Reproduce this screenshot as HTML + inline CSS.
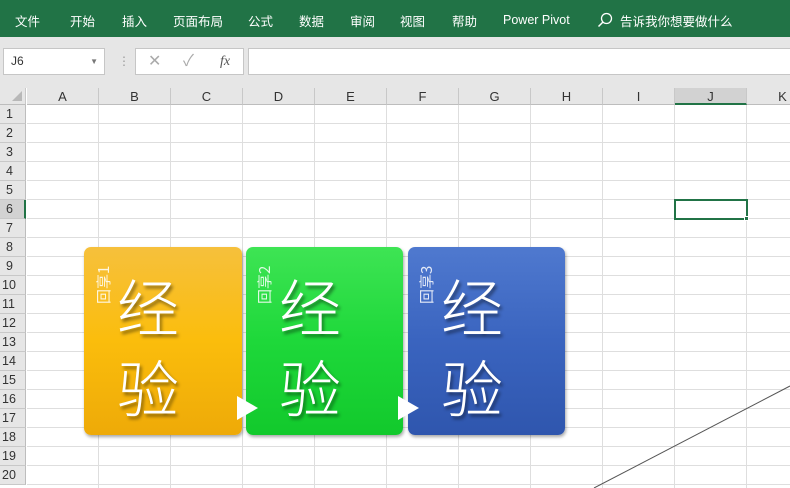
<!DOCTYPE html><html><head><meta charset="utf-8"><style>
*{margin:0;padding:0;box-sizing:border-box}
body{width:790px;height:488px;overflow:hidden;background:#fff;font-family:"Liberation Sans","Noto Sans CJK SC",sans-serif;position:relative}
.a{position:absolute}
#rib{left:0;top:0;width:790px;height:37px;background:#217346;color:#fff;font-size:12.5px}
#rib span{position:absolute;top:11px}
#fb{left:0;top:37px;width:790px;height:51px;background:#e6e6e6}
.box{background:#fff;border:1px solid #c6c6c6}
.ch{top:88px;height:17px;background:#e6e6e6;border-right:1px solid #c8c8c8;border-bottom:1px solid #bdbdbd;text-align:center;font-size:13px;line-height:17px;color:#333}
.rh{left:0;width:26px;height:19px;background:#e6e6e6;border-bottom:1px solid #c8c8c8;border-right:1px solid #bdbdbd;font-size:12.5px;line-height:19px;color:#333;padding-left:6px}
.card{border-radius:7px;box-shadow:1px 2px 3px rgba(0,0,0,.35)}
.big{position:absolute;color:#fff;font-size:62px;line-height:62px;font-weight:300;font-family:"Noto Sans CJK SC",sans-serif;text-shadow:2px 3px 3px rgba(0,0,0,.45)}
.sm{position:absolute;color:rgba(255,255,255,.85);font-size:15px;transform:rotate(-90deg);transform-origin:left top;white-space:nowrap;font-family:"Noto Sans CJK SC",sans-serif}
.tri{width:0;height:0;border-top:12px solid transparent;border-bottom:12px solid transparent;border-left:21px solid #fff}
</style></head><body>
<div id="rib" class="a">
<span style="left:15px">文件</span><span style="left:70px">开始</span><span style="left:122px">插入</span><span style="left:173px">页面布局</span><span style="left:248px">公式</span><span style="left:299px">数据</span><span style="left:350px">审阅</span><span style="left:400px">视图</span><span style="left:452px">帮助</span><span style="left:503px;top:13px">Power Pivot</span>
<svg class="a" style="left:597px;top:12px" width="16" height="16"><circle cx="9.5" cy="6.5" r="5" fill="none" stroke="#fff" stroke-width="1.3"/><line x1="6" y1="10" x2="1.5" y2="14.5" stroke="#fff" stroke-width="1.5"/></svg>
<span style="left:620px">告诉我你想要做什么</span></div>
<div id="fb" class="a"></div>
<div class="a box" style="left:3px;top:48px;width:102px;height:27px;font-size:12px;line-height:25px;padding-left:7px;color:#333">J6<span class="a" style="right:6px;top:0;font-size:8px;color:#777">▼</span></div>
<div class="a" style="left:118px;top:54px;color:#999;font-size:12px">⋮</div>
<div class="a box" style="left:135px;top:48px;width:109px;height:27px;color:#aaa;font-size:16px;line-height:25px"><span class="a" style="left:12px">✕</span><span class="a" style="left:47px">✓</span><span class="a" style="left:84px;font-style:italic;font-family:'Liberation Serif';color:#555;font-size:14px">fx</span></div>
<div class="a box" style="left:248px;top:48px;width:545px;height:27px"></div>
<div class="a" style="left:0;top:88px;width:26px;height:17px;background:#e6e6e6;border-right:1px solid #c8c8c8;border-bottom:1px solid #bdbdbd"><div class="a" style="right:3px;bottom:3px;width:0;height:0;border-left:10px solid transparent;border-bottom:10px solid #b8b8b8"></div></div>
<div class="a ch" style="left:27px;width:72px">A</div><div class="a ch" style="left:99px;width:72px">B</div><div class="a ch" style="left:171px;width:72px">C</div><div class="a ch" style="left:243px;width:72px">D</div><div class="a ch" style="left:315px;width:72px">E</div><div class="a ch" style="left:387px;width:72px">F</div><div class="a ch" style="left:459px;width:72px">G</div><div class="a ch" style="left:531px;width:72px">H</div><div class="a ch" style="left:603px;width:72px">I</div><div class="a ch" style="left:675px;width:72px;background:#d2d2d2;border-bottom:2px solid #217346">J</div><div class="a ch" style="left:747px;width:72px">K</div>
<div class="a" style="left:27px;top:105px;width:763px;height:383px;background-image:linear-gradient(to right,#dedede 1px,transparent 1px),linear-gradient(to bottom,#dedede 1px,transparent 1px);background-size:72px 19px;background-position:71px 18px"></div>
<div class="a rh" style="top:105px">1</div><div class="a rh" style="top:124px">2</div><div class="a rh" style="top:143px">3</div><div class="a rh" style="top:162px">4</div><div class="a rh" style="top:181px">5</div><div class="a rh" style="top:200px;background:#d2d2d2;border-right:2px solid #217346">6</div><div class="a rh" style="top:219px">7</div><div class="a rh" style="top:238px">8</div><div class="a rh" style="top:257px">9</div><div class="a rh" style="top:276px;padding-left:2px">10</div><div class="a rh" style="top:295px;padding-left:2px">11</div><div class="a rh" style="top:314px;padding-left:2px">12</div><div class="a rh" style="top:333px;padding-left:2px">13</div><div class="a rh" style="top:352px;padding-left:2px">14</div><div class="a rh" style="top:371px;padding-left:2px">15</div><div class="a rh" style="top:390px;padding-left:2px">16</div><div class="a rh" style="top:409px;padding-left:2px">17</div><div class="a rh" style="top:428px;padding-left:2px">18</div><div class="a rh" style="top:447px;padding-left:2px">19</div><div class="a rh" style="top:466px;padding-left:2px">20</div>
<div class="a" style="left:674px;top:199px;width:74px;height:21px;border:2px solid #217346"></div>
<div class="a" style="left:744px;top:216px;width:5px;height:5px;background:#217346;border:1px solid #fff"></div>
<svg class="a" style="left:0;top:0" width="790" height="488"><line x1="594" y1="488" x2="790" y2="386" stroke="#555" stroke-width="1"/></svg>

<div class="a card" style="left:84px;top:247px;width:158px;height:188px;background:linear-gradient(#f6c03c,#fbbd0c 50%,#eeaa08)"></div>
<div class="a card" style="left:246px;top:247px;width:157px;height:188px;background:linear-gradient(#3ee454,#1ed83a 50%,#12c92c)"></div>
<div class="a card" style="left:408px;top:247px;width:157px;height:188px;background:linear-gradient(#4f79cf,#3a64bf 50%,#2f56ae)"></div>
<div class="sm" style="left:93px;top:304px">回享1</div><div class="sm" style="left:254px;top:304px">回享2</div><div class="sm" style="left:416px;top:304px">回享3</div>
<div class="big" style="left:117px;top:273px">经</div><div class="big" style="left:117px;top:354px">验</div>
<div class="big" style="left:279px;top:273px">经</div><div class="big" style="left:279px;top:354px">验</div>
<div class="big" style="left:441px;top:273px">经</div><div class="big" style="left:441px;top:354px">验</div>
<div class="a tri" style="left:237px;top:396px"></div><div class="a tri" style="left:398px;top:396px"></div>
</body></html>
